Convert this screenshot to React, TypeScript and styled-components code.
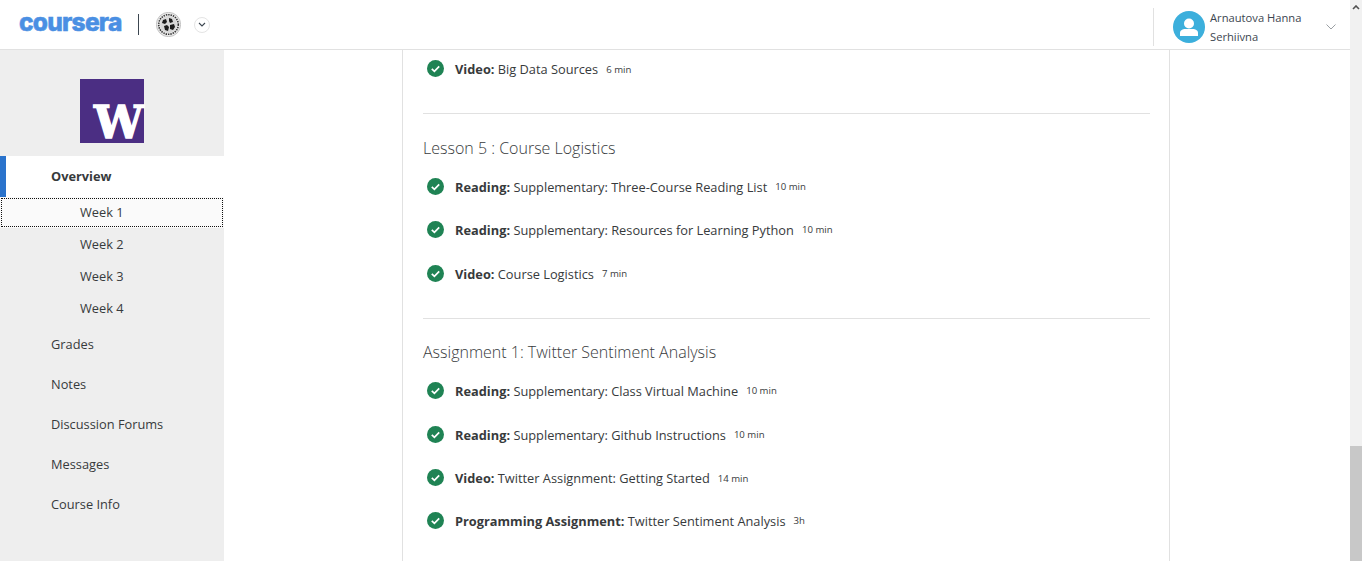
import React from "react";
import styled, { createGlobalStyle } from "styled-components";

const Global = createGlobalStyle`
  html, body { margin: 0; padding: 0; height: 100%; overflow: hidden; background: #fff; }
  body { font-family: "Open Sans", "Liberation Sans", sans-serif; color: #373a3c; }
  #root { height: 561px; }
  * { box-sizing: border-box; }
`;

const Page = styled.div`
  display: flex;
  width: 1362px;
  height: 561px;
  overflow: hidden;
`;
const Main = styled.div`
  width: 1350px;
  display: flex;
  flex-direction: column;
`;
const Header = styled.header`
  height: 50px;
  flex: none;
  display: flex;
  align-items: center;
  border-bottom: 1px solid #e1e1e1;
  background: #fff;
`;
const Logo = styled.span`
  margin-left: 19px;
  width: 103px;
  font-family: "Inter", sans-serif;
  font-weight: 800;
  font-size: 24.5px;
  letter-spacing: -0.75px;
  -webkit-text-stroke: 0.5px #4a8fe3;
  color: #4a8fe3;
  line-height: 1;
  margin-top: -4px;
  white-space: nowrap;
`;
const Divider = styled.span`
  width: 1px;
  height: 21px;
  background: #3c4650;
  margin: 0 0 0 16px;
`;
const Emblem = styled.svg`
  margin-left: 17px;
  width: 25px;
  height: 25px;
`;
const MenuCircle = styled.span`
  width: 16px;
  height: 16px;
  margin-left: 13px;
  border-radius: 50%;
  border: 1px solid #e4e4e4;
  display: flex;
  align-items: center;
  justify-content: center;
`;
const Account = styled.div`
  margin-left: auto;
  align-self: flex-start;
  margin-top: 8px;
  width: 197px;
  height: 38px;
  border-left: 1px solid #e1e1e1;
  display: flex;
  align-items: center;
  padding-left: 19px;
`;
const AccountName = styled.div`
  margin-left: 5px;
  width: 108px;
  font-size: 11.2px;
  line-height: 19px;
  color: #3c4650;
`;
const Caret = styled.svg`
  margin-left: 8px;
  width: 10px;
  height: 6px;
`;
const Body = styled.div`
  flex: 1;
  display: flex;
  min-height: 0;
`;
const Sidebar = styled.nav`
  width: 224px;
  flex: none;
  background: #eee;
`;
const Brand = styled.div`
  height: 106px;
  padding: 29px 0 0 80px;
`;
const BrandTile = styled.div`
  width: 64px;
  height: 64px;
  background: #4b2e83;
  padding: 26px 0 0 14px;
`;
const BrandMark = styled.span`
  display: block;
  font-family: "DejaVu Serif", serif;
  font-weight: 700;
  font-size: 44px;
  line-height: 36px;
  -webkit-text-stroke: 1.4px #fff;
  color: #fff;
  white-space: nowrap;
`;
const NavCurrent = styled.div`
  height: 41px;
  background: #fff;
  border-left: 6px solid #2a73cc;
  padding: 0 0 2px 45px;
  display: flex;
  align-items: center;
  font-size: 12.8px;
  font-weight: 700;
  color: #373a3c;
`;
const WeekItem = styled.div<{ $focused?: boolean }>`
  height: 32px;
  padding: 0 0 2px 80px;
  display: flex;
  align-items: center;
  font-size: 12.8px;
  color: #373a3c;
  ${(p) => p.$focused && `
    background: #fafafa;
    outline: 1px dotted #111;
    outline-offset: -2px;
    height: 31px;
    margin-bottom: 1px;
    padding-bottom: 1px;
  `}
`;
const NavItem = styled.div`
  height: 40px;
  padding: 0 0 2px 51px;
  display: flex;
  align-items: center;
  font-size: 12.8px;
  color: #373a3c;
`;
const Gutter = styled.div`
  width: 178px;
  flex: none;
`;
const Content = styled.main`
  width: 768px;
  flex: none;
  border-left: 1px solid #e1e1e1;
  border-right: 1px solid #e1e1e1;
  padding: 0 19px 0 20px;
`;
const Section = styled.section<{ $top: number; $bottom?: number }>`
  padding-top: ${(p) => p.$top}px;
  padding-bottom: ${(p) => p.$bottom ?? 0}px;
`;
const Lead = styled.div`
  padding-bottom: 25px;
`;
const Rule = styled.hr`
  margin: 0;
  border: 0;
  border-top: 1px solid #e1e1e1;
`;
const Title = styled.h3`
  margin: 0;
  font-size: 16px;
  font-weight: 300;
  line-height: 34px;
  height: 34px;
  color: #373a3c;
`;
const Row = styled.div<{ $h: number }>`
  height: ${(p) => p.$h}px;
  display: flex;
  align-items: center;
  padding-left: 4px;
  white-space: nowrap;
`;
const Check = styled.svg`
  width: 17px;
  height: 17px;
  flex: none;
  margin-top: -1px;
`;
const Label = styled.span`
  margin-left: 11px;
  font-size: 12.8px;
  color: #373a3c;
`;
const Kind = styled.b`
  font-weight: 700;
`;
const Duration = styled.span`
  margin-left: 8px;
  font-size: 9.6px;
  color: #373a3c;
`;
const Scrollbar = styled.div`
  width: 12px;
  flex: none;
  background: #f1f1f1;
  display: flex;
  flex-direction: column;
  align-items: center;
`;
const ScrollArrow = styled.svg`
  width: 8px;
  height: 5px;
  margin-top: 5px;
`;
const Thumb = styled.div`
  margin-top: auto;
  width: 12px;
  height: 115px;
  background: #c8c8c8;
`;

type Item = { kind: string; text: string; time: string; h: number };

const Tick = () => (
  <Check viewBox="0 0 17 17">
    <circle cx="8.5" cy="8.5" r="8.5" fill="#1f8354" />
    <path d="M4.8 8.8l2.6 2.5 4.8-5" fill="none" stroke="#fff" strokeWidth="1.7" />
  </Check>
);

const Entry = ({ kind, text, time, h }: Item) => (
  <Row $h={h}>
    <Tick />
    <Label>
      <Kind>{kind}:</Kind> {text}
    </Label>
    <Duration>{time}</Duration>
  </Row>
);

const lesson5: Item[] = [
  { kind: "Reading", text: "Supplementary: Three-Course Reading List", time: "10 min", h: 43 },
  { kind: "Reading", text: "Supplementary: Resources for Learning Python", time: "10 min", h: 43 },
  { kind: "Video", text: "Course Logistics", time: "7 min", h: 45 },
];
const assignment: Item[] = [
  { kind: "Reading", text: "Supplementary: Class Virtual Machine", time: "10 min", h: 43 },
  { kind: "Reading", text: "Supplementary: Github Instructions", time: "10 min", h: 45 },
  { kind: "Video", text: "Twitter Assignment: Getting Started", time: "14 min", h: 42 },
  { kind: "Programming Assignment", text: "Twitter Sentiment Analysis", time: "3h", h: 43 },
];

const blotches = [
  "M7 8l3-1 1 3-2 2-3-1z",
  "M13 6l3 1 1 3-3 1-1-2z",
  "M8 14l3-1 2 2-1 4-3-1z",
  "M14 13l4-1 1 3-2 3-3-1z",
];

export default function App() {
  return (
    <Page>
      <Global />
      <Main>
        <Header>
          <Logo>coursera</Logo>
          <Divider />
          <Emblem viewBox="0 0 25 25">
            <circle cx="12.5" cy="12.5" r="12.2" fill="#e8e8e8" stroke="#aaa" strokeWidth="0.6" />
            <circle cx="12.5" cy="12.5" r="9.8" fill="none" stroke="#333" strokeWidth="1.6" strokeDasharray="1.4 1" />
            <circle cx="12.5" cy="12.5" r="8.4" fill="#d8d8d8" />
            {blotches.map((d) => (
              <path key={d} d={d} fill="#1c1c1c" />
            ))}
          </Emblem>
          <MenuCircle>
            <svg width="8" height="5" viewBox="0 0 8 5">
              <path d="M1 1l3 3 3-3" fill="none" stroke="#3c4650" strokeWidth="1.1" />
            </svg>
          </MenuCircle>
          <Account>
            <svg width="32" height="32" viewBox="0 0 32 32">
              <circle cx="16" cy="16" r="16" fill="#3cafdc" />
              <circle cx="16" cy="12.5" r="5" fill="#fff" />
              <path d="M7 25v-3c0-3 3-4 5-4h8c2 0 5 1 5 4v3z" fill="#fff" />
            </svg>
            <AccountName>Arnautova Hanna Serhiivna</AccountName>
            <Caret viewBox="0 0 10 6">
              <path d="M.5.5L5 5 9.5.5" fill="none" stroke="#9a9fa3" strokeWidth="1" />
            </Caret>
          </Account>
        </Header>
        <Body>
          <Sidebar>
            <Brand>
              <BrandTile>
                <BrandMark>W</BrandMark>
              </BrandTile>
            </Brand>
            <NavCurrent>Overview</NavCurrent>
            <WeekItem $focused>Week 1</WeekItem>
            <WeekItem>Week 2</WeekItem>
            <WeekItem>Week 3</WeekItem>
            <WeekItem>Week 4</WeekItem>
            <NavItem>Grades</NavItem>
            <NavItem>Notes</NavItem>
            <NavItem>Discussion Forums</NavItem>
            <NavItem>Messages</NavItem>
            <NavItem>Course Info</NavItem>
          </Sidebar>
          <Gutter />
          <Content>
            <Lead>
              <Row $h={38}>
                <Tick />
                <Label>
                  <Kind>Video:</Kind> Big Data Sources
                </Label>
                <Duration>6 min</Duration>
              </Row>
            </Lead>
            <Rule />
            <Section $top={17} $bottom={22}>
              <Title>Lesson 5 : Course Logistics</Title>
              {lesson5.map((i) => (
                <Entry key={i.text} {...i} />
              ))}
            </Section>
            <Rule />
            <Section $top={16}>
              <Title>Assignment 1: Twitter Sentiment Analysis</Title>
              {assignment.map((i) => (
                <Entry key={i.text} {...i} />
              ))}
            </Section>
          </Content>
        </Body>
      </Main>
      <Scrollbar>
        <ScrollArrow viewBox="0 0 8 5">
          <path d="M1 4l3-3 3 3" fill="none" stroke="#505050" strokeWidth="1.6" />
        </ScrollArrow>
        <Thumb />
      </Scrollbar>
    </Page>
  );
}
